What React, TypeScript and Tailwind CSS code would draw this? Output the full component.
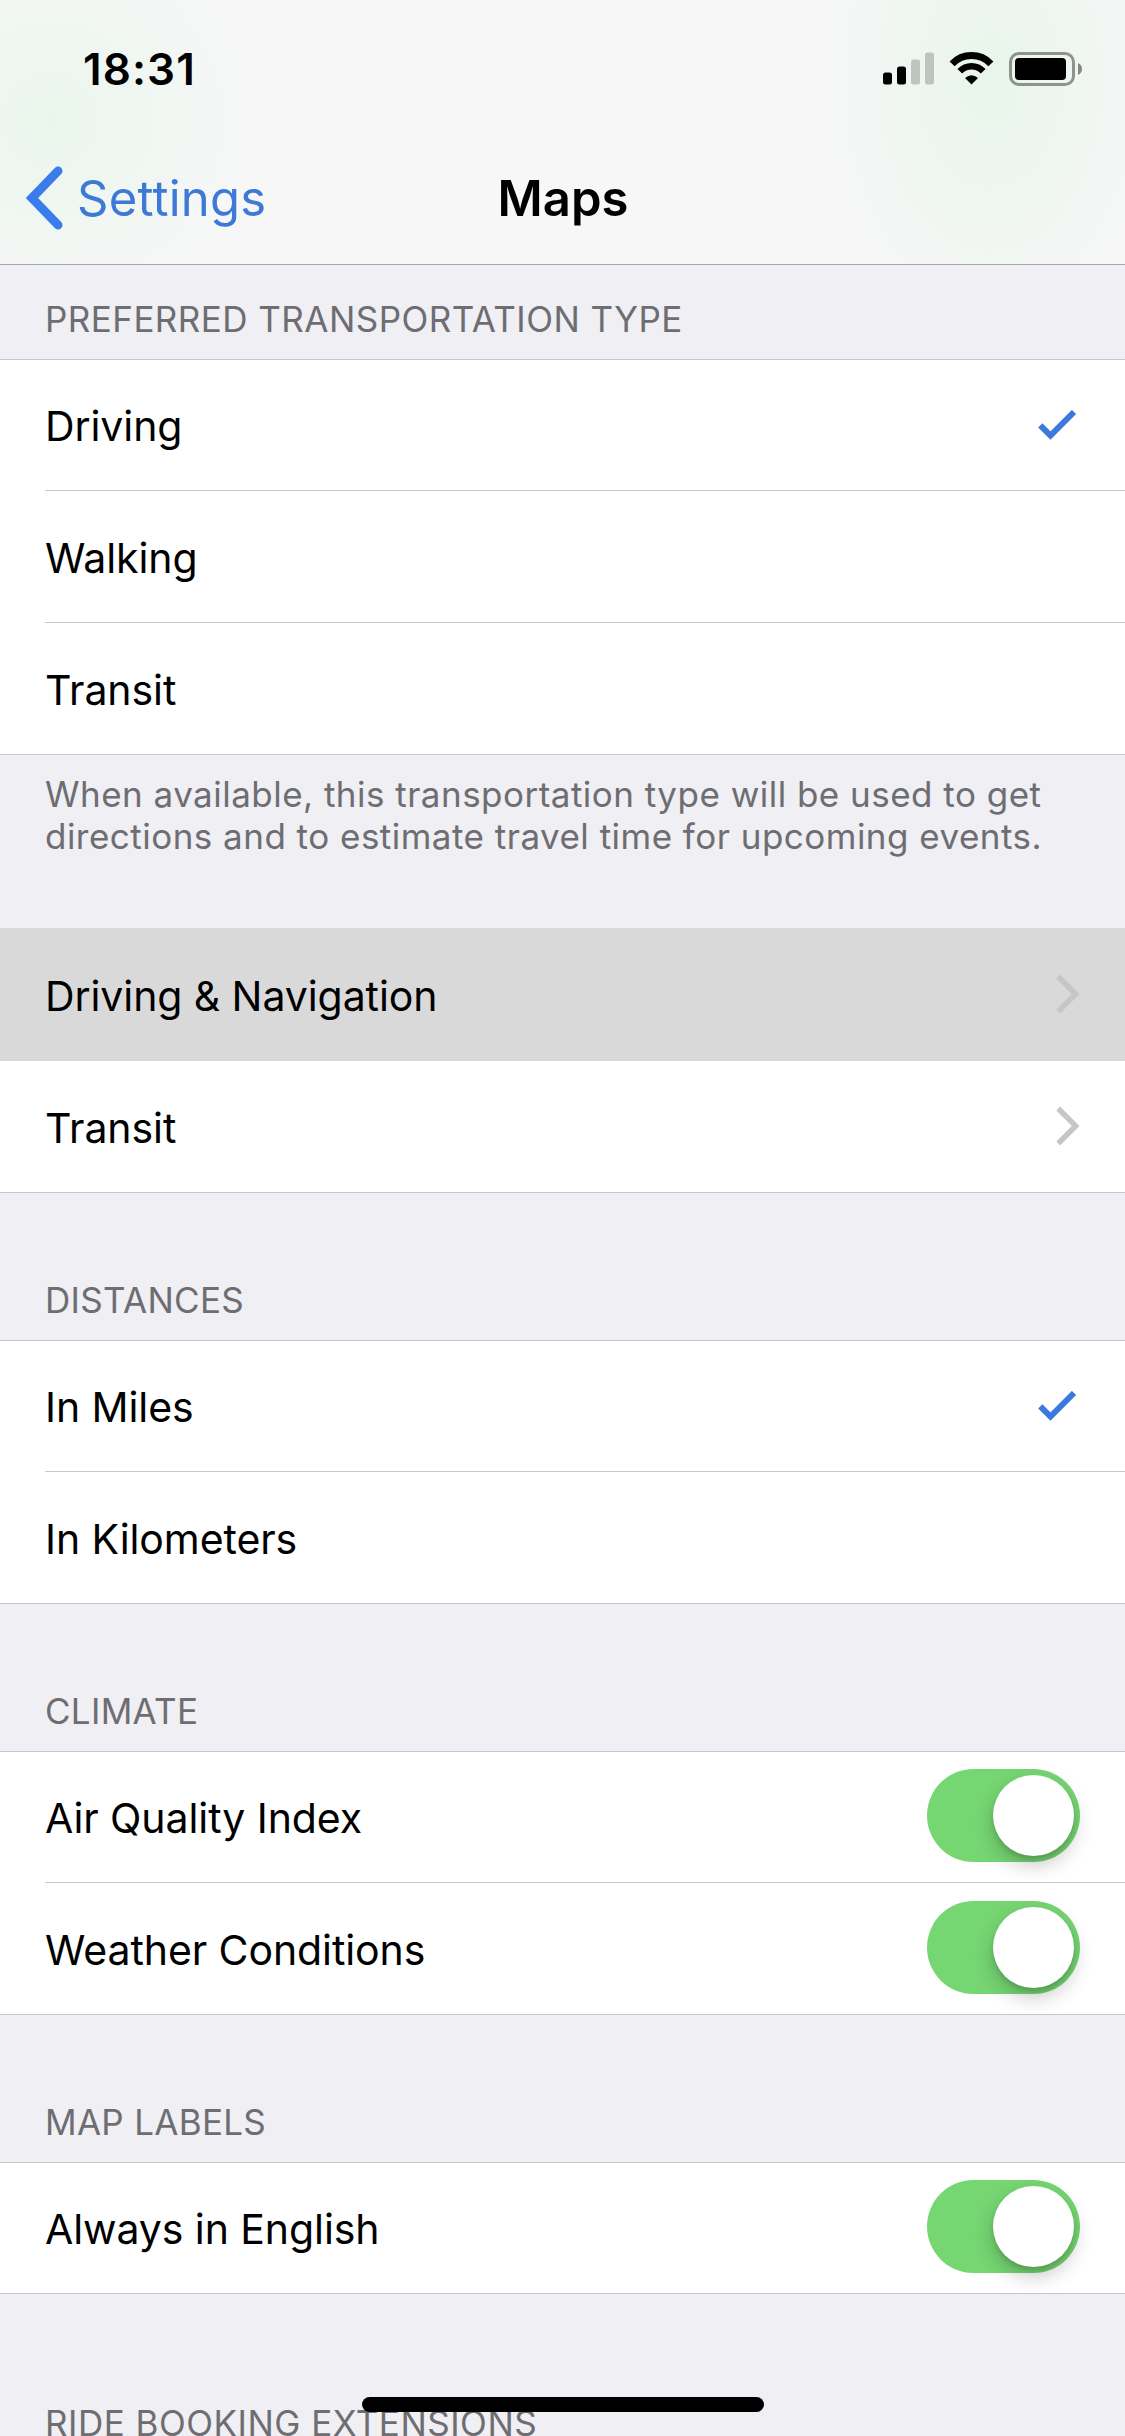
import { useState, type ReactNode } from "react";

function SignalIcon() {
  return (
    <svg width="51" height="33" viewBox="0 0 51 33">
      <rect x="0" y="20.5" width="9" height="12" rx="2.5" />
      <rect x="14" y="14.5" width="9" height="18" rx="2.5" />
      <rect x="28" y="7.5" width="9" height="25" rx="2.5" opacity="0.2" />
      <rect x="42" y="0.5" width="9" height="32" rx="2.5" opacity="0.2" />
    </svg>
  );
}

function WifiIcon() {
  return (
    <svg width="45" height="33" viewBox="0 0 45 33" fill="none" stroke="#000">
      <path d="M3.1 11.9A26.8 26.8 0 0 1 41.9 11.9" strokeWidth="7" />
      <path d="M10.8 19.2A16.2 16.2 0 0 1 34.2 19.2" strokeWidth="6.6" />
      <path d="M16 26Q22.5 20.4 29 26L22.5 32.6Z" fill="#000" stroke="none" />
    </svg>
  );
}

function BatteryIcon() {
  return (
    <svg width="73" height="34" viewBox="0 0 73 34">
      <rect x="1.5" y="1.5" width="63" height="31" rx="8.5" fill="none" stroke="#000" strokeWidth="3" opacity="0.4" />
      <rect x="6" y="6" width="51" height="22" rx="4" />
      <path d="M69 11Q73 13 73 17T69 23Z" opacity="0.45" />
    </svg>
  );
}

function CheckIcon() {
  return (
    <svg width="40" height="32" viewBox="0 0 40 32" className="mt-[2px] mr-[47px]" fill="none" stroke="#3d78dc" strokeWidth="6">
      <path d="M2.3 15.3L12.5 25.5L36 2" />
    </svg>
  );
}

function ChevronIcon() {
  return (
    <svg width="24" height="40" viewBox="0 0 24 40" className="mr-[45px] mb-[2px]" fill="none" stroke="#c6c6c8" strokeWidth="5.4">
      <path d="M2.2 2.5L19.7 20L2.2 37.5" />
    </svg>
  );
}

function Toggle() {
  const [on, setOn] = useState(true);

  return (
    <button
      role="switch"
      aria-checked={on}
      onClick={() => setOn(!on)}
      className={`mr-[45px] mb-[3px] flex h-[93px] w-[153px] items-center rounded-full p-[6px] ${on ? "justify-end bg-[#76d672]" : "justify-start bg-[#e5e5ea]"}`}
    >
      <span className="size-[81px] rounded-full bg-white shadow-[0_9px_20px_rgba(0,0,0,0.22),0_3px_4px_rgba(0,0,0,0.12)]" />
    </button>
  );
}

function Group({ children }: { children: ReactNode }) {
  return <div className="border-y border-[#c8c7cc] bg-white">{children}</div>;
}

function Row({ label, children, divider = false }: { label: string; children?: ReactNode; divider?: boolean }) {
  return (
    <div className={`ml-[45px] flex h-[131px] items-center justify-between ${divider ? "border-b border-[#c8c7cc]" : ""}`}>
      <span className="pt-[2px] text-[41px] leading-[50px] tracking-[-0.08px]">{label}</span>
      {children}
    </div>
  );
}

function SectionTitle({ children }: { children: string }) {
  return (
    <h2 className="flex h-[147px] items-end pb-[19px] pl-[45px] text-[35px] leading-[42px] tracking-[0.3px] text-[#6d6d72]">
      {children}
    </h2>
  );
}

export default function App() {
  return (
    <div className="relative h-[2436px] w-[1125px] overflow-hidden bg-[#efeff4] font-['Inter',sans-serif] text-black">
      <header className="h-[265px] border-b border-[#a7a7ab] bg-[#f7f7f8] bg-[radial-gradient(ellipse_210px_200px_at_50px_120px,#eaf6ec_0%,transparent_100%),radial-gradient(ellipse_170px_260px_at_990px_80px,#e8f5ea_0%,transparent_100%)]">
        {/* status bar */}
        <div className="flex h-[132px] items-start justify-between pr-[43px] pl-[83px]">
          <span className="pt-[42px] text-[44px] leading-[54px] font-semibold tracking-[1.1px]">18:31</span>
          <div className="flex items-start gap-[15px] pt-[52px]">
            <SignalIcon />
            <WifiIcon />
            <BatteryIcon />
          </div>
        </div>

        {/* nav bar */}
        <div className="grid h-[132px] grid-cols-3 items-center">
          <button className="flex items-center pl-[25px] text-[49px] leading-[60px] tracking-[0.2px] text-[#3f79d6]">
            <svg width="38" height="64" viewBox="0 0 38 64" className="mr-[14px]" fill="none" stroke="#3b7cec" strokeWidth="9" strokeLinecap="round">
              <path d="M33 5L7 32L33 59" />
            </svg>
            <span className="pt-[2px]">Settings</span>
          </button>
          <h1 className="pt-[2px] pl-px text-center text-[49px] leading-[60px] font-semibold">Maps</h1>
        </div>
      </header>

      <main>
        <h2 className="flex h-[94px] items-end pb-[19px] pl-[45px] text-[35px] leading-[42px] tracking-[0.45px] text-[#6d6d72]">
          PREFERRED TRANSPORTATION TYPE
        </h2>
        <Group>
          <Row label="Driving" divider>
            <CheckIcon />
          </Row>
          <div className="pt-px">
            <Row label="Walking" divider />
          </div>
          <Row label="Transit" />
        </Group>
        <p className="h-[173px] pt-[18px] pl-[45px] text-[35px] leading-[42px] tracking-[0.48px] text-[#6d6d72]">
          When available, this transportation type will be used to get
          <br />
          directions and to estimate travel time for upcoming events.
        </p>

        {/* pressed row hides its separators */}
        <div className="border-b border-[#c8c7cc] bg-white">
          <div className="h-[133px] bg-[#d9d9d9] pt-px">
            <Row label="Driving & Navigation">
              <ChevronIcon />
            </Row>
          </div>
          <Row label="Transit">
            <ChevronIcon />
          </Row>
        </div>

        <SectionTitle>DISTANCES</SectionTitle>
        <Group>
          <Row label="In Miles" divider>
            <CheckIcon />
          </Row>
          <Row label="In Kilometers" />
        </Group>

        <SectionTitle>CLIMATE</SectionTitle>
        <Group>
          <Row label="Air Quality Index" divider>
            <Toggle />
          </Row>
          <Row label="Weather Conditions">
            <Toggle />
          </Row>
        </Group>

        <SectionTitle>MAP LABELS</SectionTitle>
        <Group>
          <div className="-mt-px">
            <Row label="Always in English">
              <Toggle />
            </Row>
          </div>
        </Group>

        <h2 className="pt-[108px] pl-[45px] text-[35px] leading-[42px] tracking-[0.5px] text-[#6d6d72]">
          RIDE BOOKING EXTENSIONS
        </h2>
      </main>

      {/* home indicator */}
      <div className="absolute bottom-[24px] left-[362px] h-[15px] w-[402px] rounded-full bg-black" />
    </div>
  );
}
